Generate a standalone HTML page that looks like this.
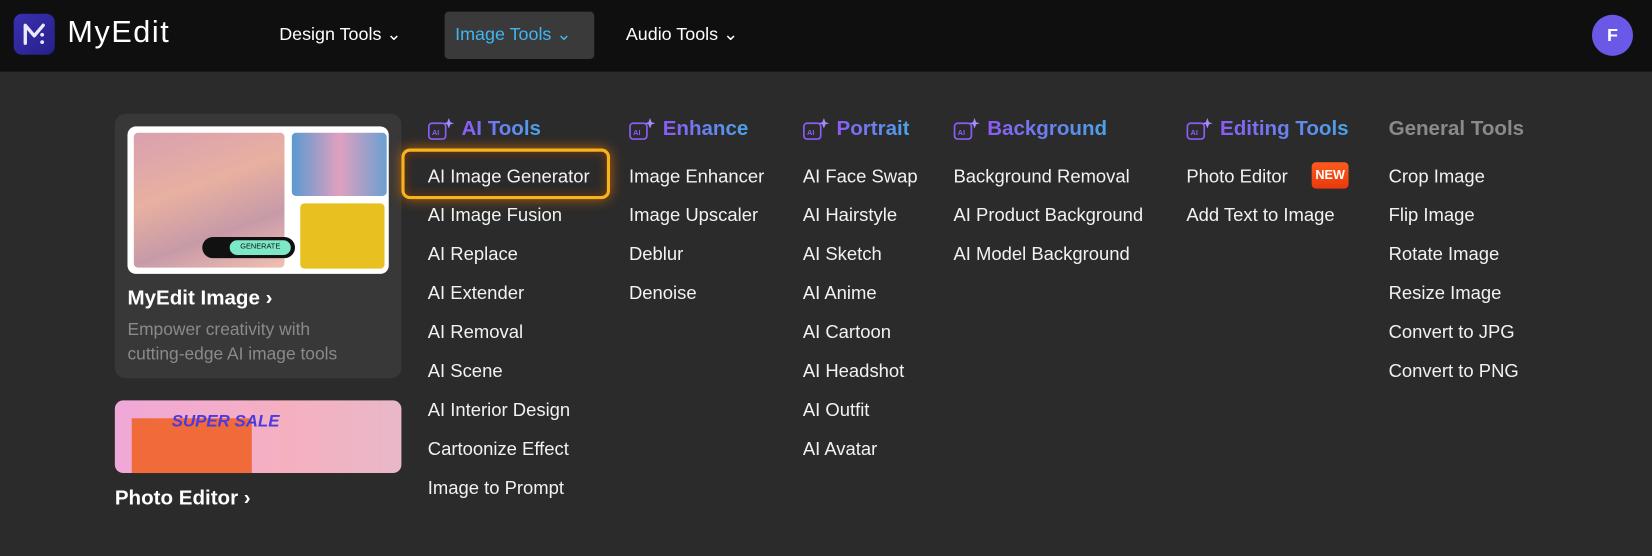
<!DOCTYPE html>
<html><head><meta charset="utf-8"><style>
*{margin:0;padding:0;box-sizing:border-box}
body{width:1652px;height:556px;background:#2b2b2b;font-family:"Liberation Sans",sans-serif;overflow:hidden;color:#fff}
#w{position:relative;width:1568px;height:528px;transform:scale(1.05357);transform-origin:0 0}
.hdr{position:absolute;left:0;top:0;width:1568px;height:68px;background:#0f0f0f}
.abs{position:absolute;white-space:nowrap}
.nav{font-size:17px;top:23px;color:#fff}
.h{font-size:19.5px;font-weight:bold;top:111px;background:linear-gradient(90deg,#8b5cf6,#4aa3e8);-webkit-background-clip:text;background-clip:text;color:transparent}
.it{font-size:17.5px;color:#f2f2f2}
.ic{position:absolute;top:112px}
</style></head><body><div id="w">
<div class="hdr"></div>
<div class="abs" style="left:13px;top:13px;width:39px;height:39px;border-radius:8px;background:linear-gradient(135deg,#3b2fb0,#26208a)"></div>
<svg class="abs" style="left:13px;top:13px" width="39" height="39" viewBox="0 0 39 39"><path d="M11 28 V11 L19.5 21 L28 11" fill="none" stroke="#ece8ff" stroke-width="3.2" stroke-linejoin="round" stroke-linecap="round"/><circle cx="27" cy="20" r="1.8" fill="#ece8ff"/><circle cx="27" cy="27" r="1.8" fill="#ece8ff"/></svg>
<div class="abs" style="left:64px;top:15px;font-size:29px;color:#fff;letter-spacing:1.5px">MyEdit</div>
<div class="abs nav" style="left:265px">Design Tools ⌄</div>
<div class="abs" style="left:422px;top:11px;width:142px;height:45px;background:#3a3a3a;border-radius:4px"></div>
<div class="abs nav" style="left:432px;color:#3fb6f2">Image Tools ⌄</div>
<div class="abs nav" style="left:594px">Audio Tools ⌄</div>
<div class="abs" style="left:1511px;top:14px;width:39px;height:39px;border-radius:50%;background:#6a58e6;text-align:center;line-height:39px;font-size:17px;font-weight:bold">F</div>

<div class="abs" style="left:109px;top:108px;width:272px;height:251px;background:#383838;border-radius:10px"></div>
<div class="abs" style="left:121px;top:120px;width:248px;height:140px;background:#fff;border-radius:8px"></div>
<div class="abs" style="left:127px;top:126px;width:143px;height:128px;border-radius:4px;background:linear-gradient(160deg,#d9a0b0,#e8b0a0 40%,#c79aa8 70%,#f0c0b0)"></div>
<div class="abs" style="left:277px;top:126px;width:90px;height:60px;border-radius:4px;background:linear-gradient(90deg,#5a9ad0,#e0a0c0,#6aa0d0)"></div>
<div class="abs" style="left:285px;top:193px;width:80px;height:62px;border-radius:4px;background:#e8c020"></div>
<div class="abs" style="left:192px;top:225px;width:88px;height:20px;border-radius:10px;background:#111"></div>
<div class="abs" style="left:218px;top:228px;width:58px;height:14px;border-radius:7px;background:#7de8c8;font-size:7px;color:#111;text-align:center;line-height:14px">GENERATE</div>
<div class="abs" style="left:121px;top:272px;font-size:19.5px;font-weight:bold">MyEdit Image ›</div>
<div class="abs" style="left:121px;top:302px;font-size:16.5px;color:#8a8a8a;line-height:23px">Empower creativity with<br>cutting-edge AI image tools</div>
<div class="abs" style="left:109px;top:380px;width:272px;height:69px;border-radius:8px;background:linear-gradient(90deg,#f0a8d8,#f5b0c0 60%,#e8b8c8)"></div>
<div class="abs" style="left:125px;top:397px;width:114px;height:52px;background:#f06a3a"></div>
<div class="abs" style="left:163px;top:392px;font-size:16px;font-weight:bold;font-style:italic;color:#4a3ae0">SUPER SALE</div>
<div class="abs" style="left:109px;top:462px;font-size:19.5px;font-weight:bold">Photo Editor ›</div>

<div class="abs" style="left:381px;top:141px;width:198px;height:48px;border:3px solid #f7b21c;border-radius:8px;box-shadow:0 0 12px #b8620c, inset 0 0 10px #7a3a08"></div>

<svg class="ic" style="left:406px" width="26" height="22" viewBox="0 0 26 22"><rect x="1" y="5" width="16" height="15" rx="3" fill="none" stroke="#8b5cf6" stroke-width="1.6"/><text x="4" y="16" font-size="7" fill="#8b5cf6" font-family="Liberation Sans" font-weight="bold">AI</text><path d="M20 0 L21.5 4 L25 5 L21.5 6 L20 10 L18.5 6 L15 5 L18.5 4Z" fill="#a78bfa"/></svg>
<svg class="ic" style="left:597px" width="26" height="22" viewBox="0 0 26 22"><rect x="1" y="5" width="16" height="15" rx="3" fill="none" stroke="#8b5cf6" stroke-width="1.6"/><text x="4" y="16" font-size="7" fill="#8b5cf6" font-family="Liberation Sans" font-weight="bold">AI</text><path d="M20 0 L21.5 4 L25 5 L21.5 6 L20 10 L18.5 6 L15 5 L18.5 4Z" fill="#a78bfa"/></svg>
<svg class="ic" style="left:762px" width="26" height="22" viewBox="0 0 26 22"><rect x="1" y="5" width="16" height="15" rx="3" fill="none" stroke="#8b5cf6" stroke-width="1.6"/><text x="4" y="16" font-size="7" fill="#8b5cf6" font-family="Liberation Sans" font-weight="bold">AI</text><path d="M20 0 L21.5 4 L25 5 L21.5 6 L20 10 L18.5 6 L15 5 L18.5 4Z" fill="#a78bfa"/></svg>
<svg class="ic" style="left:905px" width="26" height="22" viewBox="0 0 26 22"><rect x="1" y="5" width="16" height="15" rx="3" fill="none" stroke="#8b5cf6" stroke-width="1.6"/><text x="4" y="16" font-size="7" fill="#8b5cf6" font-family="Liberation Sans" font-weight="bold">AI</text><path d="M20 0 L21.5 4 L25 5 L21.5 6 L20 10 L18.5 6 L15 5 L18.5 4Z" fill="#a78bfa"/></svg>
<svg class="ic" style="left:1126px" width="26" height="22" viewBox="0 0 26 22"><rect x="1" y="5" width="16" height="15" rx="3" fill="none" stroke="#8b5cf6" stroke-width="1.6"/><text x="4" y="16" font-size="7" fill="#8b5cf6" font-family="Liberation Sans" font-weight="bold">AI</text><path d="M20 0 L21.5 4 L25 5 L21.5 6 L20 10 L18.5 6 L15 5 L18.5 4Z" fill="#a78bfa"/></svg>

<div class="abs h" style="left:438px">AI Tools</div>
<div class="abs h" style="left:629px">Enhance</div>
<div class="abs h" style="left:794px">Portrait</div>
<div class="abs h" style="left:937px">Background</div>
<div class="abs h" style="left:1158px">Editing Tools</div>
<div class="abs" style="left:1318px;top:111px;font-size:19.5px;font-weight:bold;color:#8a8a8a">General Tools</div>

<div class="abs it" style="left:406px;top:149px;line-height:37px">AI Image Generator<br>AI Image Fusion<br>AI Replace<br>AI Extender<br>AI Removal<br>AI Scene<br>AI Interior Design<br>Cartoonize Effect<br>Image to Prompt</div>
<div class="abs it" style="left:597px;top:149px;line-height:37px">Image Enhancer<br>Image Upscaler<br>Deblur<br>Denoise</div>
<div class="abs it" style="left:762px;top:149px;line-height:37px">AI Face Swap<br>AI Hairstyle<br>AI Sketch<br>AI Anime<br>AI Cartoon<br>AI Headshot<br>AI Outfit<br>AI Avatar</div>
<div class="abs it" style="left:905px;top:149px;line-height:37px">Background Removal<br>AI Product Background<br>AI Model Background</div>
<div class="abs it" style="left:1126px;top:149px;line-height:37px">Photo Editor<br>Add Text to Image</div>
<div class="abs" style="left:1245px;top:154px;width:35px;height:25px;border-radius:4px;background:linear-gradient(180deg,#ff5a1f,#e83a0c);font-size:12px;font-weight:bold;text-align:center;line-height:25px">NEW</div>
<div class="abs it" style="left:1318px;top:149px;line-height:37px">Crop Image<br>Flip Image<br>Rotate Image<br>Resize Image<br>Convert to JPG<br>Convert to PNG</div>
</div></body></html>
